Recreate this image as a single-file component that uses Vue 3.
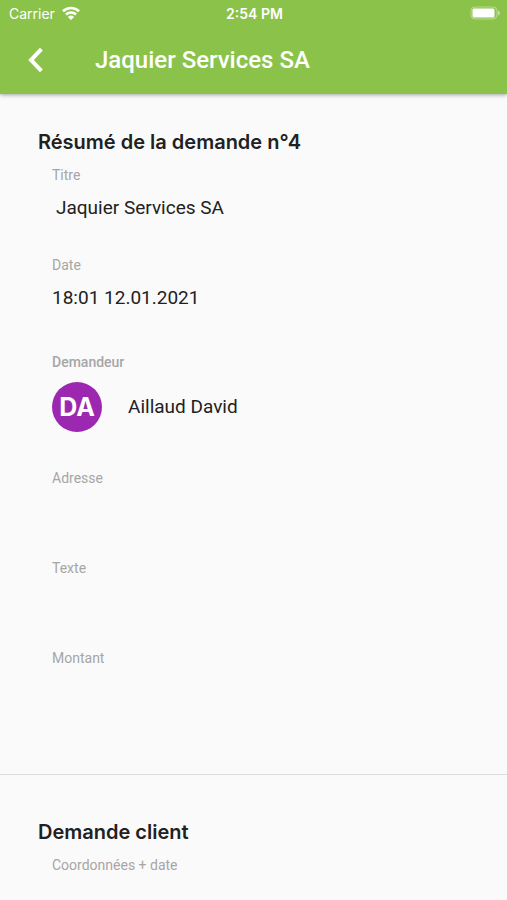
<template>
  <div class="page">
    <header class="app-bar">
      <div class="status-bar">
        <div class="carrier">
          <span>Carrier</span>
          <svg class="wifi" viewBox="0 0 18 14" aria-hidden="true">
            <path d="M1 5.2a11.5 11.5 0 0 1 16 0" />
            <path d="M4 8.5a7.2 7.2 0 0 1 10 0" />
            <path class="dot" d="M9 14 5.9 10.9a4.4 4.4 0 0 1 6.2 0z" />
          </svg>
        </div>
        <span class="clock">2:54 PM</span>
        <div class="battery">
          <svg viewBox="0 0 30 14" aria-hidden="true">
            <rect class="shell" x="1" y="1" width="26" height="12" rx="4" />
            <rect class="charge" x="2.5" y="2.5" width="22" height="9" rx="1.5" />
            <path class="tip" d="M28 4.5c2.4 1 2.4 4 0 5z" />
          </svg>
        </div>
      </div>
      <div class="toolbar">
        <button type="button" class="back" aria-label="Retour">
          <svg viewBox="0 0 16 26" aria-hidden="true">
            <path d="M13.4 2.2 3 13l10.4 10.8" />
          </svg>
        </button>
        <h1>{{ demande.titre }}</h1>
      </div>
    </header>

    <main>
      <section class="resume">
        <h2>Résumé de la demande n°{{ demande.numero }}</h2>
        <dl>
          <div class="field">
            <dt>Titre</dt>
            <dd class="indent">{{ demande.titre }}</dd>
          </div>
          <div class="field">
            <dt>Date</dt>
            <dd>{{ demande.date }}</dd>
          </div>
          <div class="field demandeur">
            <dt>Demandeur</dt>
            <dd>
              <span class="avatar">{{ initiales }}</span>
              <span>{{ demande.nom }} {{ demande.prenom }}</span>
            </dd>
          </div>
          <div v-for="champ in champs" :key="champ.label" class="field">
            <dt>{{ champ.label }}</dt>
            <dd>{{ champ.valeur }}</dd>
          </div>
        </dl>
      </section>

      <section class="client">
        <h2>Demande client</h2>
        <p class="label">Coordonnées + date</p>
      </section>
    </main>
  </div>
</template>

<script setup>
import { computed, ref } from 'vue'

const demande = ref({
  numero: 4,
  titre: 'Jaquier Services SA',
  date: '18:01 12.01.2021',
  prenom: 'David',
  nom: 'Aillaud'
})

const champs = [
  { label: 'Adresse', valeur: '' },
  { label: 'Texte', valeur: '' },
  { label: 'Montant', valeur: '' }
]

const initiales = computed(() => demande.value.prenom[0] + demande.value.nom[0])
</script>

<style>
body {
  margin: 0;
  background: #fafafa;
}
</style>

<style scoped>
.page {
  min-height: 100vh;
  background: #fafafa;
  color: #212121;
  font-family: Roboto, "Liberation Sans", sans-serif;
}

.app-bar {
  background: #8bc34a;
  color: #fff;
  box-shadow: 0 1px 4px rgba(0, 0, 0, 0.35);
}

.status-bar {
  display: grid;
  grid-template-columns: 1fr auto 1fr;
  align-items: center;
  height: 26px;
  padding: 0 7px 0 9px;
  font-family: Inter, sans-serif;
  font-size: 14px;
}
.carrier {
  display: flex;
  align-items: center;
  gap: 7px;
}
.wifi {
  width: 18px;
  height: 14px;
  fill: none;
  stroke: #fff;
  stroke-width: 2.6;
}
.wifi .dot {
  fill: #fff;
  stroke: none;
}
.clock {
  font-weight: 600;
}
.battery {
  display: flex;
  justify-content: flex-end;
}
.battery svg {
  width: 30px;
  height: 14px;
}
.shell {
  fill: none;
  stroke: #fff;
  stroke-opacity: 0.4;
}
.charge {
  fill: #fff;
}
.tip {
  fill: #fff;
  fill-opacity: 0.5;
}

.toolbar {
  display: flex;
  align-items: center;
  height: 68px;
  padding: 0 16px 0 28px;
}
.back {
  display: flex;
  width: 67px;
  padding: 0;
  border: 0;
  background: none;
  cursor: pointer;
}
.back svg {
  width: 16px;
  height: 26px;
  fill: none;
  stroke: #fff;
  stroke-width: 4;
}
h1 {
  margin: 0;
  font-size: 24px;
  font-weight: 500;
  line-height: 32px;
}

section {
  padding: 36px 38px 34px;
}
h2 {
  margin: 0 0 13px;
  font-family: Inter, sans-serif;
  font-size: 20px;
  font-weight: 600;
  line-height: 24px;
}
dl {
  margin: 0;
}
.field {
  padding: 0 14px 35px;
}
dt,
.label {
  color: #a6a6a6;
  font-size: 14px;
  line-height: 16px;
}
dd {
  min-height: 28px;
  margin: 11px 0 0;
  font-size: 19px;
  line-height: 28px;
}
.indent {
  padding-left: 4px;
}

.demandeur {
  padding-top: 7px;
  padding-bottom: 38px;
}
.demandeur dt {
  font-weight: 500;
}
.demandeur dd {
  display: flex;
  align-items: center;
  gap: 26px;
  margin-top: 12px;
}
.avatar {
  display: flex;
  flex-shrink: 0;
  align-items: center;
  justify-content: center;
  width: 50px;
  height: 50px;
  border-radius: 50%;
  background: #9c27b0;
  color: #fff;
  font-family: Inter, sans-serif;
  font-size: 25px;
  font-weight: 700;
}

.client {
  padding-top: 45px;
  padding-bottom: 24px;
  border-top: 1px solid #dcdcdc;
}
.label {
  margin: 0;
  padding-left: 14px;
}
</style>
